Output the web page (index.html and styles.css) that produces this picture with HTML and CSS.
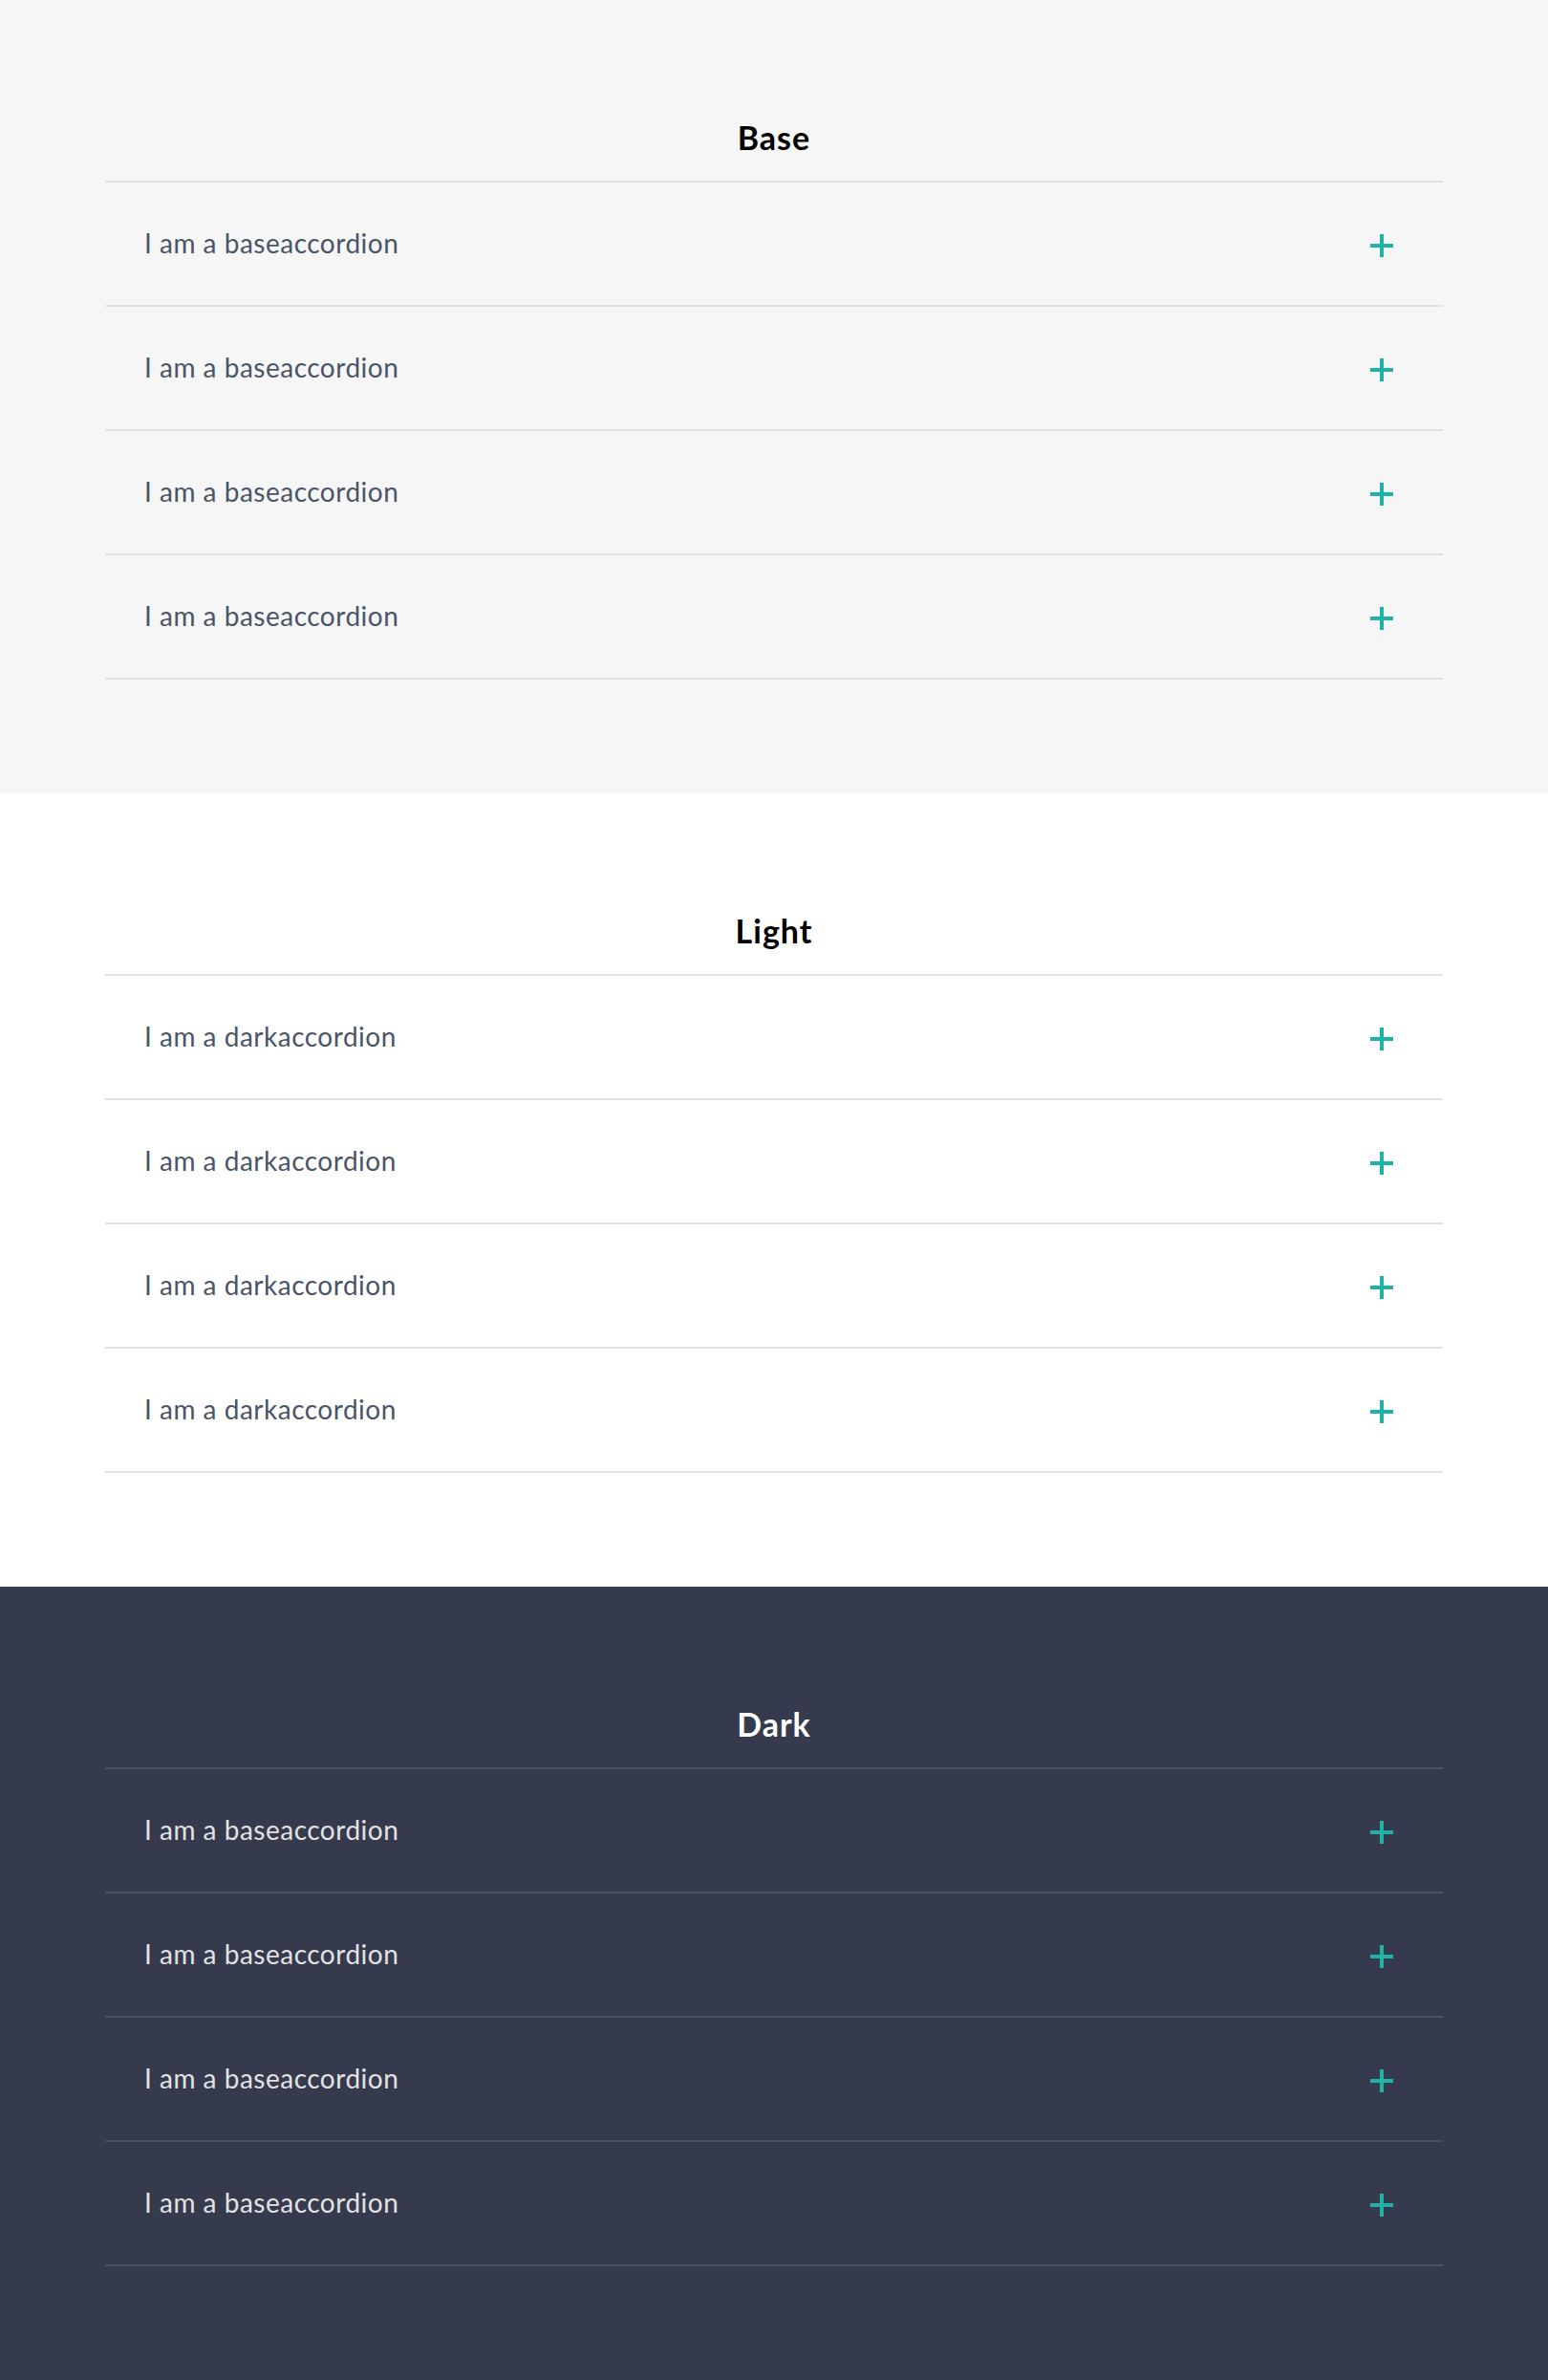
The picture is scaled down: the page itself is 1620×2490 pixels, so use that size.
FILE: index.html
```html
<!DOCTYPE html>
<html lang="en">
<head>
<meta charset="utf-8">
<title>Accordions</title>
<link rel="stylesheet" href="styles.css">
</head>
<body>
<section class="block block--base">
  <h2 class="block__title">Base</h2>
  <ul class="accordion">
    <li class="accordion__row"><span class="accordion__label">I am a baseaccordion</span><span class="accordion__icon"></span></li>
    <li class="accordion__row"><span class="accordion__label">I am a baseaccordion</span><span class="accordion__icon"></span></li>
    <li class="accordion__row"><span class="accordion__label">I am a baseaccordion</span><span class="accordion__icon"></span></li>
    <li class="accordion__row"><span class="accordion__label">I am a baseaccordion</span><span class="accordion__icon"></span></li>
  </ul>
</section>
<section class="block block--light">
  <h2 class="block__title">Light</h2>
  <ul class="accordion">
    <li class="accordion__row"><span class="accordion__label">I am a darkaccordion</span><span class="accordion__icon"></span></li>
    <li class="accordion__row"><span class="accordion__label">I am a darkaccordion</span><span class="accordion__icon"></span></li>
    <li class="accordion__row"><span class="accordion__label">I am a darkaccordion</span><span class="accordion__icon"></span></li>
    <li class="accordion__row"><span class="accordion__label">I am a darkaccordion</span><span class="accordion__icon"></span></li>
  </ul>
</section>
<section class="block block--dark">
  <h2 class="block__title">Dark</h2>
  <ul class="accordion">
    <li class="accordion__row"><span class="accordion__label">I am a baseaccordion</span><span class="accordion__icon"></span></li>
    <li class="accordion__row"><span class="accordion__label">I am a baseaccordion</span><span class="accordion__icon"></span></li>
    <li class="accordion__row"><span class="accordion__label">I am a baseaccordion</span><span class="accordion__icon"></span></li>
    <li class="accordion__row"><span class="accordion__label">I am a baseaccordion</span><span class="accordion__icon"></span></li>
  </ul>
</section>
</body>
</html>
```

FILE: styles.css
```css
* { box-sizing: border-box; }
html, body { margin: 0; padding: 0; }
body {
  font-family: Lato, "Open Sans", "Liberation Sans", sans-serif;
  width: 1620px;
}
.block {
  height: 830px;
  padding: 124px 110px 0;
}
.block--base { background: #f6f6f6; --line: #e1e1e1; --text: #4a5568; --title: #000; }
.block--light { background: #ffffff; --line: #e3e3e3; --text: #4a5568; --title: #000; }
.block--dark { background: #353a4d; --line: #4c5264; --text: #e2e2e4; --title: #ffffff; }

.block__title {
  margin: 0 0 25px;
  font-size: 34px;
  line-height: 40px;
  font-weight: 700;
  letter-spacing: 1px;
  text-align: center;
  color: var(--title);
}
.accordion {
  list-style: none;
  margin: 0;
  padding: 0;
  border-top: 2px solid var(--line);
}
.accordion__row {
  display: flex;
  align-items: center;
  justify-content: space-between;
  height: 130px;
  padding: 0 52px 0 41px;
  border-bottom: 2px solid var(--line);
}
.accordion__label {
  font-size: 28px;
  letter-spacing: 0.5px;
  margin-bottom: 3px;
  color: var(--text);
}
.accordion__icon {
  position: relative;
  width: 24px;
  height: 24px;
  margin-top: 4px;
}
.accordion__icon::before,
.accordion__icon::after {
  content: "";
  position: absolute;
  background: #1fb3a8;
}
.accordion__icon::before { left: 0; right: 0; top: 10px; height: 4px; }
.accordion__icon::after { top: 0; bottom: 0; left: 10px; width: 4px; }
```
